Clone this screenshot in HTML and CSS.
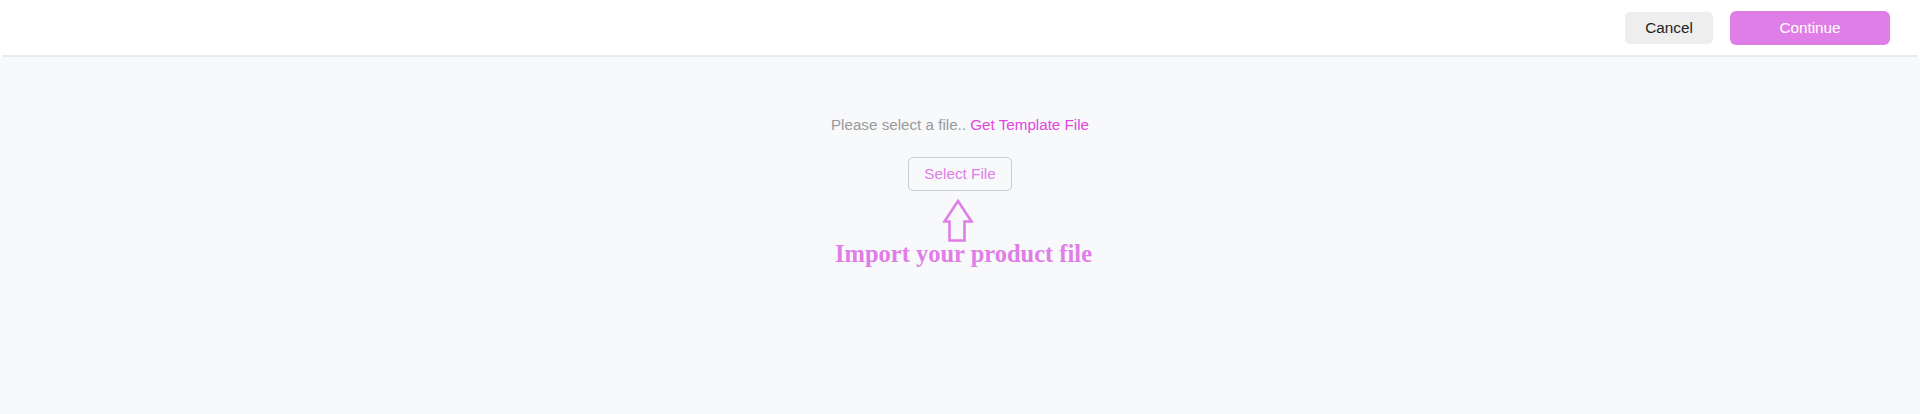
FILE: index.html
```html
<!DOCTYPE html>
<html lang="en">
<head>
<meta charset="utf-8">
<title>Import</title>
<link rel="stylesheet" href="styles.css">
</head>
<body>
<header class="topbar">
  <button class="btn btn-cancel">Cancel</button>
  <button class="btn btn-continue">Continue</button>
</header>
<main class="content">
  <p class="hint">Please select a file.. <a class="template-link" href="#">Get Template File</a></p>
  <button class="btn-select">Select File</button>
  <svg class="arrow" width="32" height="43" viewBox="0 0 32 43" aria-hidden="true">
    <polygon points="16,2 29.5,22.5 22.5,22.5 22.5,41.5 7.5,41.5 7.5,22.5 2.5,22.5" fill="none" stroke="#df7ee6" stroke-width="2.6" stroke-linejoin="miter"/>
  </svg>
  <div class="import-label">Import your product file</div>
</main>
</body>
</html>
```
FILE: styles.css
```css
* { box-sizing: border-box; }
html, body { margin: 0; padding: 0; }
body {
  background: #f8f9fb;
  font-family: "Liberation Sans", Arial, sans-serif;
  height: 414px;
  overflow: hidden;
}
.topbar {
  height: 57px;
  background: #ffffff;
  display: flex;
  justify-content: flex-end;
  align-items: center;
  padding: 0 30px 2px 0;
  position: relative;
}
.topbar::after {
  content: "";
  position: absolute;
  left: 2px;
  right: 2px;
  bottom: 0;
  height: 2px;
  background: #ebebed;
}
.btn {
  border: none;
  font-family: "Liberation Sans", Arial, sans-serif;
  font-size: 15.3px;
  cursor: pointer;
  padding: 0;
}
.btn-cancel {
  width: 88px;
  height: 32px;
  background: #eeeeee;
  color: #222222;
  border-radius: 5px;
  margin-right: 17px;
}
.btn-continue {
  width: 160px;
  height: 34px;
  background: #df7ee6;
  color: #ffffff;
  border-radius: 6px;
}
.content {
  display: flex;
  flex-direction: column;
  align-items: center;
  padding-top: 59px;
}
.hint {
  margin: 0;
  font-size: 15.2px;
  line-height: 17px;
  color: #9a9a9a;
}
.template-link {
  color: #e046dc;
  text-decoration: none;
}
.btn-select {
  margin-top: 24px;
  width: 104px;
  height: 34px;
  background: transparent;
  border: 1px solid #cdcdcd;
  border-radius: 5px;
  color: #df7ee6;
  font-family: "Liberation Sans", Arial, sans-serif;
  font-size: 15.3px;
  padding: 0;
}
.arrow {
  display: block;
  margin-top: 8px;
  margin-left: -5px;
}
.import-label {
  margin-top: -2px;
  font-family: "Liberation Serif", "Times New Roman", serif;
  font-weight: bold;
  font-size: 24.5px;
  line-height: 27px;
  color: #df7ee6;
  margin-left: 7px;
}
```
